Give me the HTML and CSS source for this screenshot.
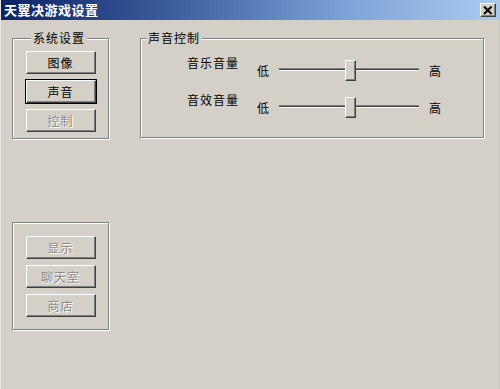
FILE: index.html
```html
<!DOCTYPE html>
<html lang="zh-CN">
<head>
    <meta charset="UTF-8">
    <meta name="viewport" content="width=device-width, initial-scale=1.0">
    <title>天翼决游戏设置</title>
    <link rel="stylesheet" href="styles.css">
</head>
<body>
    <div class="window">
        <div class="titlebar">
            <span class="title">天翼决游戏设置</span>
            <span class="close-btn">
                <svg width="10" height="9" viewBox="0 0 10 9"><path d="M1 0.5 L8.5 8 M8.5 0.5 L1 8" stroke="#000" stroke-width="2"/></svg>
            </span>
        </div>

        <div class="client">
            <div class="left-col">
                <fieldset class="group group-system">
                    <legend>系统设置</legend>
                    <button class="btn">图像</button>
                    <button class="btn btn-default">声音</button>
                    <button class="btn" disabled>控制</button>
                </fieldset>

                <fieldset class="group group-extra">
                    <button class="btn" disabled>显示</button>
                    <button class="btn" disabled>聊天室</button>
                    <button class="btn" disabled>商店</button>
                </fieldset>
            </div>

            <fieldset class="group group-sound">
                <legend>声音控制</legend>
                <div class="sound-rows">
                    <div class="slider-row">
                        <span class="row-label">音乐音量</span>
                        <span class="end-label low">低</span>
                        <div class="slider"><span class="thumb"></span></div>
                        <span class="end-label">高</span>
                    </div>
                    <div class="slider-row">
                        <span class="row-label">音效音量</span>
                        <span class="end-label low">低</span>
                        <div class="slider"><span class="thumb"></span></div>
                        <span class="end-label">高</span>
                    </div>
                </div>
            </fieldset>
        </div>
    </div>
</body>
</html>
```

FILE: styles.css
```css
body { margin: 0; font-family: "Noto Sans CJK SC", "Liberation Sans", sans-serif; font-size: 12px; background: #d4d0c8; }
.window { width: 500px; height: 389px; background: #d4d0c8; box-sizing: border-box; border-left: 1px solid #e8e6e0; border-right: 1px solid #c8c5bd; overflow: hidden; }

/* title bar */
.titlebar { height: 20px; display: flex; align-items: center; justify-content: space-between; padding: 0 3px 0 3px; background: linear-gradient(to right, #0b2366 0%, #3d5f9e 35%, #7fa4d8 70%, #aacbf0 100%); }
.title { color: #fff; font-weight: bold; font-size: 13px; letter-spacing: 0.5px; line-height: 20px; }
.close-btn { width: 16px; height: 14px; box-sizing: border-box; display: flex; align-items: center; justify-content: center; background: #d4d0c8; border: 1px solid; border-color: #fff #404040 #404040 #fff; box-shadow: inset -1px -1px 0 #808080; }

/* client area */
.client { display: flex; align-items: flex-start; padding: 11px 0 0 11px; }
.left-col { display: flex; flex-direction: column; width: 97px; }

.group { margin: 0; padding: 0; border: 1px solid #808080; box-shadow: 1px 1px 0 #fff, inset 1px 1px 0 #fff; }
.group legend { padding: 0 2px; font-size: 12px; line-height: 14px; letter-spacing: 1px; color: #000; background: #d4d0c8; }

.group-system { padding: 6px 0 6px 0; display: flex; flex-direction: column; align-items: center; gap: 6px; }
.group-system legend { margin-left: 18px; }
.group-extra { margin-top: 83px; padding: 13px 0 12px 0; display: flex; flex-direction: column; align-items: center; gap: 6px; }

/* buttons */
.btn { width: 70px; height: 23px; margin: 0; padding: 0; font-family: inherit; font-size: 12px; letter-spacing: 1px; color: #000; background: #d4d0c8; border: 1px solid; border-color: #fff #404040 #404040 #fff; box-shadow: inset -1px -1px 0 #808080; }
.btn-default { box-shadow: inset -1px -1px 0 #808080, 0 0 0 1px #000; }
.btn:disabled { color: #8c8a84; text-shadow: 1px 1px 0 #fff; }

/* sound control */
.group-sound { margin-left: 31px; width: 344px; box-sizing: border-box; }
.group-sound legend { margin-left: 5px; }
.sound-rows { padding: 15px 0 19px 46px; display: flex; flex-direction: column; gap: 16px; }
.slider-row { display: flex; align-items: center; height: 21px; }
.row-label { align-self: flex-start; margin-top: -4px; width: 52px; letter-spacing: 1px; line-height: 14px; }
.end-label { line-height: 14px; }
.end-label.low { margin-left: 18px; }
.slider { width: 140px; height: 21px; margin: 0 10px; display: flex; align-items: flex-start; background: linear-gradient(to bottom, transparent 0, transparent 8px, #808080 8px, #808080 9px, #404040 9px, #404040 10px, #fff 10px, #fff 11px, transparent 11px); }
.thumb { width: 11px; height: 21px; box-sizing: border-box; margin-left: 66px; background: #d4d0c8; border: 1px solid; border-color: #fff #404040 #404040 #fff; box-shadow: inset -1px -1px 0 #808080; }
```
